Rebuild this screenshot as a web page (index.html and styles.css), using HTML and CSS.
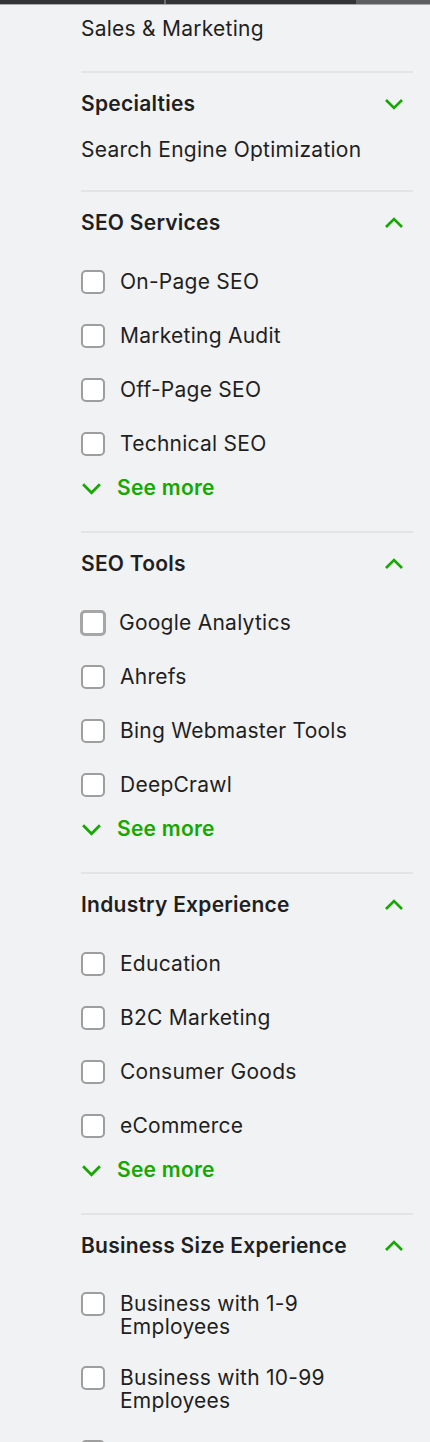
FILE: index.html
```html
<!DOCTYPE html>
<html>
<head>
<meta charset="utf-8">
<link rel="stylesheet" href="styles.css">
</head>
<body>
<div class="topbar">
  <div class="seg seg-a"></div>
  <div class="seg seg-b"></div>
  <div class="seg seg-c"></div>
</div>
<main class="filters">
  <div class="plain-value first">Sales &amp; Marketing</div>

  <section class="group">
    <div class="group-head">
      <h3>Specialties</h3>
      <svg class="chev" viewBox="0 0 20 12"><path d="M2 2 L10 10 L18 2"/></svg>
    </div>
    <div class="plain-value">Search Engine Optimization</div>
  </section>

  <section class="group">
    <div class="group-head">
      <h3>SEO Services</h3>
      <svg class="chev" viewBox="0 0 20 12"><path d="M2 10 L10 2 L18 10"/></svg>
    </div>
    <ul class="opts">
      <li><span class="box"></span><span class="lbl">On-Page SEO</span></li>
      <li><span class="box"></span><span class="lbl">Marketing Audit</span></li>
      <li><span class="box"></span><span class="lbl">Off-Page SEO</span></li>
      <li><span class="box"></span><span class="lbl">Technical SEO</span></li>
    </ul>
    <div class="see-more"><svg class="chev" viewBox="0 0 20 12"><path d="M2 2 L10 10 L18 2"/></svg><span>See more</span></div>
  </section>

  <section class="group">
    <div class="group-head">
      <h3>SEO Tools</h3>
      <svg class="chev" viewBox="0 0 20 12"><path d="M2 10 L10 2 L18 10"/></svg>
    </div>
    <ul class="opts">
      <li><span class="box focus"></span><span class="lbl">Google Analytics</span></li>
      <li><span class="box"></span><span class="lbl">Ahrefs</span></li>
      <li><span class="box"></span><span class="lbl">Bing Webmaster Tools</span></li>
      <li><span class="box"></span><span class="lbl">DeepCrawl</span></li>
    </ul>
    <div class="see-more"><svg class="chev" viewBox="0 0 20 12"><path d="M2 2 L10 10 L18 2"/></svg><span>See more</span></div>
  </section>

  <section class="group">
    <div class="group-head">
      <h3>Industry Experience</h3>
      <svg class="chev" viewBox="0 0 20 12"><path d="M2 10 L10 2 L18 10"/></svg>
    </div>
    <ul class="opts">
      <li><span class="box"></span><span class="lbl">Education</span></li>
      <li><span class="box"></span><span class="lbl">B2C Marketing</span></li>
      <li><span class="box"></span><span class="lbl">Consumer Goods</span></li>
      <li><span class="box"></span><span class="lbl">eCommerce</span></li>
    </ul>
    <div class="see-more"><svg class="chev" viewBox="0 0 20 12"><path d="M2 2 L10 10 L18 2"/></svg><span>See more</span></div>
  </section>

  <section class="group">
    <div class="group-head">
      <h3>Business Size Experience</h3>
      <svg class="chev" viewBox="0 0 20 12"><path d="M2 10 L10 2 L18 10"/></svg>
    </div>
    <ul class="opts multi">
      <li><span class="box"></span><span class="lbl">Business with 1-9<br>Employees</span></li>
      <li><span class="box"></span><span class="lbl">Business with 10-99<br>Employees</span></li>
      <li><span class="box"></span><span class="lbl">Business with 100-999<br>Employees</span></li>
    </ul>
  </section>
</main>
</body>
</html>
```
FILE: styles.css
```css
html, body {
  margin: 0;
  padding: 0;
  background: #f1f2f4;
}
body {
  font-family: Inter, "Liberation Sans", sans-serif;
  color: #1f1f1f;
  width: 430px;
  height: 1442px;
  overflow: hidden;
  letter-spacing: 0.25px;
}
.topbar {
  display: flex;
  height: 4px;
  border-bottom: 1px solid #a9a9a9;
}
.seg { height: 100%; }
.seg-a { width: 164px; background: #333; border-right: 2px solid #6d6d6d; }
.seg-b { width: 190px; background: #333; }
.seg-c { flex: 1; background: #5f5f5f; }

.filters {
  padding-left: 81px;
  width: 332px;
}
.plain-value {
  font-size: 21px;
  line-height: 24px;
}
.plain-value.first {
  padding-top: 12px;
  padding-bottom: 30px;
}
.group {
  border-top: 2px solid #e3e4e6;
  padding-top: 19px;
  padding-bottom: 31px;
}
.group-head {
  display: flex;
  align-items: center;
  justify-content: space-between;
  height: 24px;
  padding-right: 9px;
}
.group-head h3 {
  margin: 0;
  font-size: 21px;
  font-weight: 600;
  line-height: 24px;
}
.chev {
  width: 20px;
  height: 12px;
  fill: none;
  stroke: #14a800;
  stroke-width: 2.6;
}
.group .plain-value {
  margin-top: 22px;
  margin-bottom: -3px;
}
.opts {
  list-style: none;
  margin: 35px 0 0;
  padding: 0;
  display: flex;
  flex-direction: column;
  gap: 30px;
}
.opts.multi {
  margin-top: 34px;
  gap: 28px;
}
.opts li {
  display: flex;
  align-items: flex-start;
  gap: 15px;
}
.box {
  flex: none;
  width: 24px;
  height: 24px;
  box-sizing: border-box;
  border: 2px solid #9e9e9e;
  border-radius: 5px;
  background: #fff;
}
.box.focus {
  width: 26px;
  height: 26px;
  margin: -1px -2px -1px -1px;
  border: 3px solid #a6a6a6;
}
.lbl {
  font-size: 21px;
  line-height: 23px;
}
.see-more {
  margin-top: 20px;
  display: flex;
  align-items: center;
  gap: 15px;
  color: #14a800;
  font-size: 21px;
  font-weight: 600;
  line-height: 24px;
}
.see-more .chev {
  width: 21px;
  height: 13px;
}
```
